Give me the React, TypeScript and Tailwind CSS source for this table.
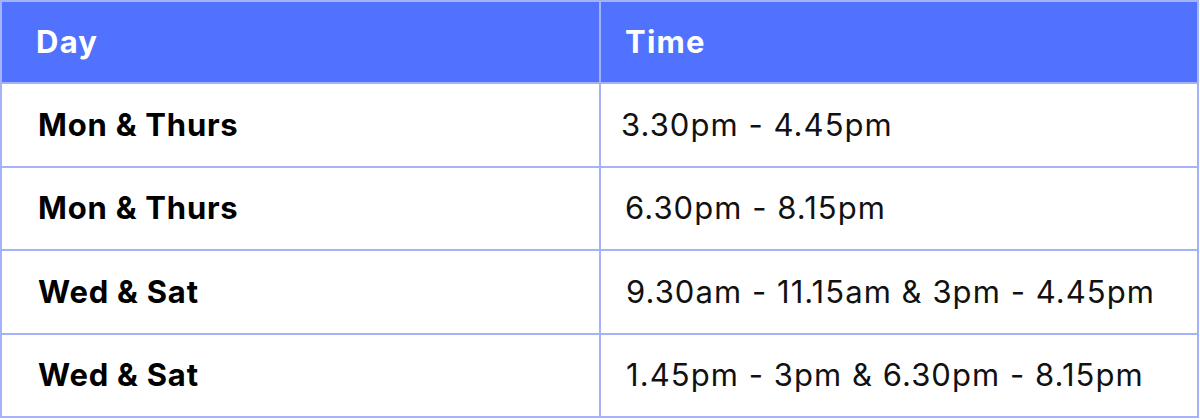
const ROWS = [
  { day: "Mon & Thurs", time: "3.30pm - 4.45pm", indent: "pl-[20px]" },
  { day: "Mon & Thurs", time: "6.30pm - 8.15pm", indent: "pl-[24px]" },
  { day: "Wed & Sat", time: "9.30am - 11.15am & 3pm - 4.45pm", indent: "pl-[25px]" },
  { day: "Wed & Sat", time: "1.45pm - 3pm & 6.30pm - 8.15pm", indent: "pl-[25px]" },
];

export default function App() {
  return (
    <div className="w-[1200px] h-[420px] bg-white font-['Inter','Noto_Sans',sans-serif]">
      <table className="w-[1199px] h-[418px] border-collapse border-2 border-[#a4b3f7] table-fixed">
        <colgroup>
          <col className="w-[599px]" />
          <col />
        </colgroup>
        <thead>
          <tr className="h-[82px] bg-[#5072ff] text-white">
            <th className="border-2 border-[#a4b3f7] text-left pl-[34px] text-[31px] tracking-[0.04em] font-bold">
              Day
            </th>
            <th className="border-2 border-[#a4b3f7] text-left pl-[24px] text-[31px] tracking-[0.04em] font-bold">
              Time
            </th>
          </tr>
        </thead>
        <tbody>
          {ROWS.map((row, i) => (
            <tr key={i} className="h-[83px]">
              <td className="border-2 border-[#a4b3f7] pl-[36px] text-[31px] tracking-[0.025em] font-bold text-black">
                {row.day}
              </td>
              <td className={`border-2 border-[#a4b3f7] ${row.indent} text-[31px] tracking-[0.034em] text-[#111]`}>
                {row.time}
              </td>
            </tr>
          ))}
        </tbody>
      </table>
    </div>
  );
}
